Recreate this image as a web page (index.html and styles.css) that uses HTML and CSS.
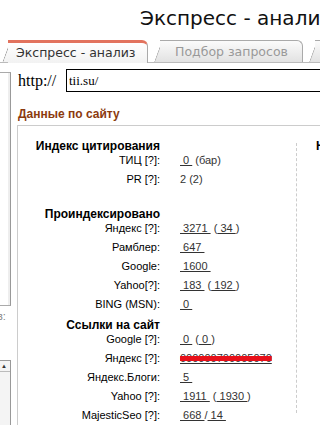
FILE: index.html
```html
<!DOCTYPE html>
<html lang="ru">

<head>
    <meta charset="UTF-8">
    <meta name="viewport" content="width=device-width, initial-scale=1.0">
    <title>Экспресс - анализ</title>
    <link rel="stylesheet" href="styles.css">
</head>

<body>

    <h1 class="title">Экспресс - анализ</h1>

    <div class="tabs">
        <div class="tab active">Экспресс - анализ</div>
        <div class="tab">Подбор запросов</div>
        <div class="tab">Позиции</div>
    </div>

    <div class="page">
        <div class="sidebar">
            <div class="side-box"></div>
            <div class="side-label">в:</div>
            <div class="side-list">
                <span class="arrow">▲</span>
            </div>
        </div>

        <div class="main">
            <div class="url-row">
                <span class="proto">http://</span>
                <input type="text" class="url" value="tii.su/">
            </div>

            <h2 class="section-title">Данные по сайту</h2>

            <div class="data-box">
                <div class="col">
                    <div class="group">
                        <div class="head">Индекс цитирования</div>
                        <div class="row"><span class="label">ТИЦ [?]:</span><span class="value"><a href="#">&nbsp;0&nbsp;</a> (бар)</span></div>
                        <div class="row"><span class="label">PR [?]:</span><span class="value">2 (2)</span></div>
                    </div>

                    <div class="group">
                        <div class="head">Проиндексировано</div>
                        <div class="row"><span class="label">Яндекс [?]:</span><span class="value"><a href="#">&nbsp;3271&nbsp;</a> (<a href="#">&nbsp;34&nbsp;</a>)</span></div>
                        <div class="row"><span class="label">Рамблер:</span><span class="value"><a href="#">&nbsp;647&nbsp;</a></span></div>
                        <div class="row"><span class="label">Google:</span><span class="value"><a href="#">&nbsp;1600&nbsp;</a></span></div>
                        <div class="row"><span class="label">Yahoo[?]:</span><span class="value"><a href="#">&nbsp;183&nbsp;</a> (<a href="#">&nbsp;192&nbsp;</a>)</span></div>
                        <div class="row"><span class="label">BING (MSN):</span><span class="value"><a href="#">&nbsp;0&nbsp;</a></span></div>
                    </div>

                    <div class="group tight">
                        <div class="head">Ссылки на сайт</div>
                        <div class="row"><span class="label">Google [?]:</span><span class="value"><a href="#">&nbsp;0&nbsp;</a> (<a href="#">&nbsp;0&nbsp;</a>)</span></div>
                        <div class="row"><span class="label">Яндекс [?]:</span><span class="value"><span class="scratch"><a href="#">000000700005070</a></span></span></div>
                        <div class="row"><span class="label">Яндекс.Блоги:</span><span class="value"><a href="#">&nbsp;5&nbsp;</a></span></div>
                        <div class="row"><span class="label">Yahoo [?]:</span><span class="value"><a href="#">&nbsp;1911&nbsp;</a> (<a href="#">&nbsp;1930&nbsp;</a>)</span></div>
                        <div class="row"><span class="label">MajesticSeo [?]:</span><span class="value"><a href="#">&nbsp;668&nbsp;</a>/<a href="#">&nbsp;14&nbsp;</a></span></div>
                    </div>
                </div>

                <div class="col2">
                    <div class="head">Нагрузка</div>
                </div>
            </div>
        </div>
    </div>

</body>

</html>
```

FILE: styles.css
```css
body {
    margin: 0;
    padding: 0;
    width: 320px;
    height: 425px;
    overflow: hidden;
    background-color: #fff;
    color: #000;
    font-family: "Liberation Sans", Arial, sans-serif;
}

.title {
    margin: 0;
    height: 40px;
    padding: 6px 0 0 140px;
    box-sizing: border-box;
    font-family: "DejaVu Sans", Verdana, sans-serif;
    font-size: 20px;
    font-weight: normal;
    line-height: 24px;
    white-space: nowrap;
    color: #111;
}

.tabs {
    display: flex;
    height: 23px;
    padding-left: 8px;
    gap: 12px;
    white-space: nowrap;
    border-bottom: 1px solid #bbb;
    box-sizing: border-box;
}

.tab {
    position: relative;
    flex: none;
    width: 143px;
    padding-left: 15px;
    box-sizing: border-box;
    font-family: "DejaVu Sans", Verdana, sans-serif;
    font-size: 12.5px;
    line-height: 21px;
    color: #999;
    background: linear-gradient(#fbfbfb, #e2e2e2);
    border-top: 1px solid #aaa;
    border-right: 1px solid #aaa;
    border-top-right-radius: 6px;
}

.tab::before {
    content: "";
    position: absolute;
    top: -1px;
    bottom: 0;
    left: -6px;
    width: 12px;
    background: linear-gradient(#fbfbfb, #e2e2e2);
    border-left: 1px solid #aaa;
    border-top: 1px solid #aaa;
    border-top-left-radius: 4px;
    transform: skewX(-20deg);
    transform-origin: bottom left;
    z-index: -1;
}

.tab.active {
    width: 140px;
    height: 23px;
    padding-left: 8px;
    color: #333;
    background: linear-gradient(#fff, #f2f2f2);
    border-top: 3px solid #e2735e;
    line-height: 19px;
}

.tab.active::before {
    top: -3px;
    background: linear-gradient(#fff, #f2f2f2);
    border-top: 3px solid #e2735e;
    border-left-color: #999;
}

.page {
    display: flex;
}

.sidebar {
    flex: none;
    width: 17px;
    padding-top: 9px;
}

.side-box {
    width: 10px;
    height: 232px;
    border-top: 1px solid #aaa;
    border-right: 1px solid #999;
    border-bottom: 1px solid #aaa;
    box-shadow: inset -2px 0 0 #eee;
}

.side-label {
    margin-top: 3px;
    font-size: 11px;
    line-height: 14px;
    color: #888;
    text-indent: -3px;
}

.side-list {
    margin-top: 37px;
    width: 10px;
    height: 70px;
    border: 1px solid #999;
    border-left: none;
    background-color: #f4f4f4;
    overflow: hidden;
}

.arrow {
    display: block;
    font-size: 6px;
    line-height: 10px;
    color: #333;
    padding-left: 1px;
    border-bottom: 1px solid #bbb;
}

.main {
    flex: 1;
    min-width: 0;
}

.url-row {
    display: flex;
    align-items: center;
    margin-top: 6px;
    padding-left: 1px;
}

.proto {
    font-family: "Liberation Serif", "Times New Roman", serif;
    font-size: 16px;
    width: 48px;
    flex: none;
}

.url {
    flex: none;
    width: 270px;
    height: 23px;
    box-sizing: border-box;
    margin: 0;
    padding: 0 2px;
    border: 1px solid #000;
    border-right: none;
    font-family: "Liberation Serif", "Times New Roman", serif;
    font-size: 13px;
}

.section-title {
    margin: 15px 0 0 1px;
    font-size: 12px;
    line-height: 14px;
    color: #8b3a0e;
}

.data-box {
    display: flex;
    margin-top: 4px;
    border-top: 1px solid #ccc;
    border-left: 1px solid #ccc;
    padding-top: 13px;
    height: 300px;
}

.col {
    flex: none;
    width: 278px;
}

.col2 {
    flex: none;
    align-self: flex-start;
    margin-top: 4px;
    height: 270px;
    padding-left: 19px;
    border-left: 1px dashed #ccc;
}

.col2 .head {
    margin-top: -4px;
    width: auto;
    text-align: left;
}

.group {
    margin-bottom: 16px;
}

.group.tight {
    margin-top: -14px;
}

.head {
    width: 142px;
    text-align: right;
    font-size: 12px;
    font-weight: bold;
    line-height: 14px;
    white-space: nowrap;
}

.row {
    display: flex;
    gap: 20px;
    font-size: 11px;
    line-height: 14px;
    padding-bottom: 5px;
    white-space: nowrap;
}

.label {
    flex: none;
    width: 142px;
    text-align: right;
}

.value {
    color: #333;
}

.value a {
    color: #333;
    text-decoration: underline;
}

.scratch {
    color: #555;
    text-decoration: line-through 5px #e8101a;
}
```
